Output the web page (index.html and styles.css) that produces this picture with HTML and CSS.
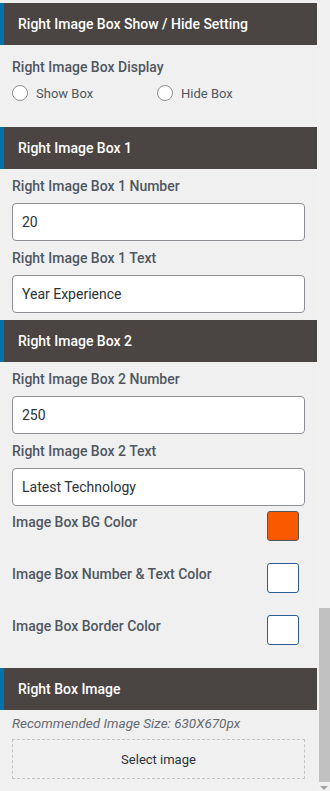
FILE: index.html
```html
<!DOCTYPE html>
<html lang="en">
<head>
    <meta charset="UTF-8">
    <meta name="viewport" content="width=device-width, initial-scale=1.0">
    <title>Right Image Box Settings</title>
    <link rel="stylesheet" href="styles.css">
</head>
<body>
    <div class="wrap">
        <div class="panel">
            <h3 class="sec_title">Right Image Box Show / Hide Setting</h3>
            <div class="sec_body radio_body">
                <p class="label">Right Image Box Display</p>
                <div class="radios">
                    <label class="opt"><span class="dot"></span>Show Box</label>
                    <label class="opt"><span class="dot"></span>Hide Box</label>
                </div>
            </div>

            <h3 class="sec_title">Right Image Box 1</h3>
            <div class="sec_body">
                <p class="label">Right Image Box 1 Number</p>
                <div class="field">20</div>
                <p class="label">Right Image Box 1 Text</p>
                <div class="field">Year Experience</div>
            </div>

            <h3 class="sec_title">Right Image Box 2</h3>
            <div class="sec_body">
                <p class="label">Right Image Box 2 Number</p>
                <div class="field">250</div>
                <p class="label">Right Image Box 2 Text</p>
                <div class="field">Latest Technology</div>
            </div>
            <div class="colors">
                <div class="color_row">
                    <p class="label">Image Box BG Color</p>
                    <span class="swatch orange"></span>
                </div>
                <div class="color_row">
                    <p class="label">Image Box Number &amp; Text Color</p>
                    <span class="swatch white"></span>
                </div>
                <div class="color_row">
                    <p class="label">Image Box Border Color</p>
                    <span class="swatch white"></span>
                </div>
            </div>

            <h3 class="sec_title">Right Box Image</h3>
            <div class="sec_body img_body">
                <p class="note">Recommended Image Size: 630X670px</p>
                <div class="select_img">Select image</div>
            </div>
        </div>
        <div class="scrollbar">
            <div class="thumb"></div>
            <span class="arrow"></span>
        </div>
    </div>
</body>
</html>
```

FILE: styles.css
```css
* {margin: 0; padding: 0; box-sizing: border-box;}
body {background-color: #f0f0f1; font-family: Roboto, "Liberation Sans", sans-serif; color: #50575e;}

.wrap {display: flex; height: 791px; overflow: hidden;}
.panel {width: 317px; padding-top: 3px;}

.sec_title {height: 42px; display: flex; align-items: center; padding-left: 14px;
            background-color: #4a4543; border-left: 4px solid #0073aa;
            color: #fff; font-size: 14px; font-weight: 500;}

.sec_body {display: flex; flex-direction: column; gap: 7px; padding: 7px 12px;}
.label {font-size: 14px; font-weight: 500; line-height: 20px; color: #50575e;}

.radio_body {padding: 12px 12px 24px; gap: 6px;}
.radios {display: flex;}
.radios .opt {display: flex; align-items: center; width: 145px; height: 20px;
              font-size: 13px; color: #50575e;}
.radios .dot {width: 16px; height: 16px; border: 1px solid #8c8f94; border-radius: 50%;
              background-color: #fff; margin-right: 8px;}

.field {height: 38px; display: flex; align-items: center; padding-left: 9px;
        background-color: #fff; border: 1px solid #8c8f94; border-radius: 4px;
        font-size: 14px; color: #2c3338;}

.colors {display: flex; flex-direction: column; gap: 22px; padding: 0 18px 23px 12px; margin-top: -2px;}
.color_row {display: flex; justify-content: space-between; align-items: flex-start; height: 30px;}
.color_row .label {padding-top: 1px;}
.swatch {width: 32px; height: 30px; border-radius: 3px; border: 1px solid #2c5e93;}
.swatch.orange {background-color: #f95a00; border-color: #50575e;}
.swatch.white {background-color: #fff;}

.img_body {padding-top: 4px; gap: 7px;}
.note {font-size: 13.5px; font-style: italic; line-height: 18px; color: #646970;}
.select_img {height: 40px; display: flex; align-items: center; justify-content: center;
             border: 1px dashed #c3c4c7; font-size: 13px; color: #2c3338;}

.scrollbar {width: 13px; display: flex; flex-direction: column; align-items: flex-end;
            background-color: #f1f1f1; padding-top: 608px;}
.scrollbar .thumb {width: 11px; height: 174px; background-color: #c1c1c1;}
.scrollbar .arrow {margin: 4px 2px 0 0; width: 0; height: 0;
                   border-left: 4px solid transparent; border-right: 4px solid transparent;
                   border-top: 4px solid #a3a3a3;}
```
